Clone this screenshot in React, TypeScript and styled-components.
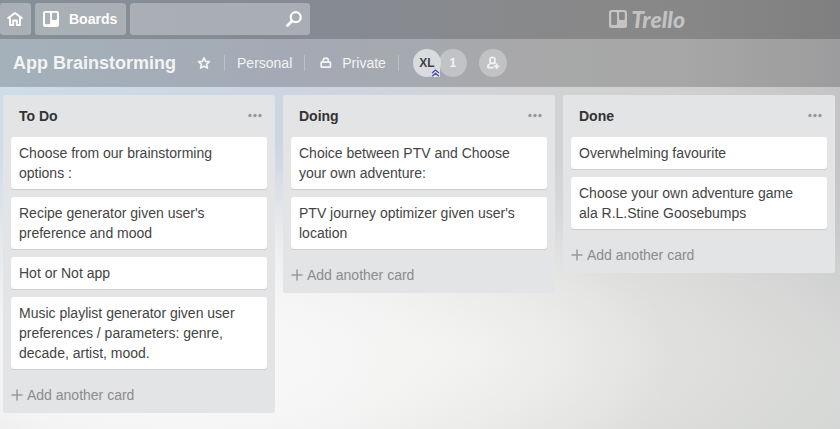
import React from "react";
import styled, { createGlobalStyle, css } from "styled-components";

const GlobalStyle = createGlobalStyle`
  *, *::before, *::after { box-sizing: border-box; }
  html, body, #root { height: 100%; }
  body {
    margin: 0;
    font-family: "Liberation Sans", Arial, sans-serif;
    font-size: 14px;
    line-height: 20px;
    color: #444;
    text-rendering: optimizeSpeed;
  }
  button, input { font: inherit; color: inherit; border: 0; margin: 0; padding: 0; text-rendering: inherit; }
  button { cursor: pointer; background: none; }
  a { color: inherit; text-decoration: none; }
  h1, h2, ul { margin: 0; padding: 0; }
  svg { display: block; flex: none; }
`;

const Page = styled.div`
  display: flex;
  flex-direction: column;
  min-height: 100%;
  background:
    radial-gradient(ellipse 60% 52% at 20% 84%, #fafafa 0%, rgba(248, 248, 248, 0.9) 35%, rgba(244, 244, 244, 0) 100%),
    radial-gradient(ellipse 58% 46% at 54% 82%, rgba(236, 236, 232, 0.95) 0%, rgba(230, 230, 228, 0) 100%),
    linear-gradient(to bottom, rgba(210, 212, 211, 0) 35%, #d2d4d3 85%),
    linear-gradient(to right, #cddde9 0%, #cdd5e3 34%, #d2d3d5 62%, #d0d0d0 82%, #c4c4c6 100%);
`;

const TopBar = styled.header`
  display: flex;
  align-items: center;
  gap: 4px;
  height: 39px;
  padding-bottom: 1px;
  background: rgba(0, 0, 0, 0.35);
  color: #fff;
`;

const navItem = css`
  display: flex;
  align-items: center;
  height: 32px;
  border-radius: 3px;
  background: rgba(255, 255, 255, 0.3);
`;

const NavButton = styled.button<{ $wide?: boolean }>`
  ${navItem}
  gap: 10px;
  padding: ${(p) => (p.$wide ? "0 9px 0 8px" : "0 8px 0 7px")};
  font-weight: 700;
`;

const SearchBox = styled.form`
  ${navItem}
  width: 180px;
  padding: 0 8px;
`;

const SearchInput = styled.input`
  flex: 1;
  min-width: 0;
  background: transparent;
  outline: none;
`;

const Logo = styled.a`
  display: flex;
  align-items: center;
  gap: 4px;
  margin: 0 155px 0 auto;
  color: rgba(255, 255, 255, 0.5);
  font: italic 900 23px/32px Lato, sans-serif;
`;

const BoardBar = styled.section`
  display: flex;
  align-items: center;
  height: 48px;
  padding-left: 13px;
  background: rgba(0, 0, 0, 0.2);
  color: #f3f3f3;
`;

const BoardTitle = styled.h1`
  margin-right: 20px;
  font-size: 18px;
  line-height: 24px;
`;

const BoardButton = styled.button`
  display: flex;
  align-items: center;
  gap: 8px;
  height: 32px;
`;

const Divider = styled.span`
  width: 1px;
  height: 16px;
  margin: 0 12px;
  background: rgba(255, 255, 255, 0.25);
`;

const Members = styled.div`
  display: flex;
  margin: 0 12px 0 2px;
`;

const Avatar = styled.button<{ $solid?: boolean }>`
  position: relative;
  z-index: ${(p) => (p.$solid ? 1 : 0)};
  display: grid;
  place-items: center;
  width: 28px;
  height: 28px;
  border-radius: 50%;
  background: ${(p) => (p.$solid ? "#d9dcdf" : "rgba(255, 255, 255, 0.3)")};
  color: ${(p) => (p.$solid ? "#444" : "#f3f3f3")};
  font-size: 12px;
  font-weight: 700;

  & + & { margin-left: -2px; }
`;

const AdminBadge = styled.span`
  position: absolute;
  right: 1px;
  bottom: 0;
  background: #dfe3e6;
`;

const Lists = styled.main`
  display: flex;
  flex: 1;
  align-items: flex-start;
  gap: 8px;
  padding: 8px 3px;
`;

const List = styled.section`
  flex: none;
  width: 272px;
  padding: 0 8px;
  border-radius: 3px;
  background: #e2e4e6;
`;

const ListHead = styled.div`
  display: flex;
  align-items: center;
  justify-content: space-between;
  height: 42px;
  padding: 0 4px 0 8px;
`;

const ListTitle = styled.h2`
  font-size: 14px;
  line-height: 20px;
  color: #333;
`;

const MenuButton = styled.button`
  color: #999;
`;

const Cards = styled.ul`
  display: grid;
  gap: 8px;
  list-style: none;
`;

const Card = styled.li`
  padding: 6px 16px 6px 8px;
  border-radius: 3px;
  background: #fff;
  box-shadow: 0 1px 0 #ccc;
`;

const AddCard = styled.button`
  display: flex;
  align-items: center;
  gap: 4px;
  width: 100%;
  height: 36px;
  margin-top: 8px;
  color: #8c8c8c;
`;

const HomeIcon = () => (
  <svg width="16" height="16" viewBox="0 0 16 16" fill="none" stroke="currentColor" strokeWidth="2" strokeLinejoin="round" strokeLinecap="round">
    <path d="M1.2 7 8 2l6.800 5" />
    <path d="M3 6.500V14h3.200v-4.500h3.600V14H13V6.500" />
  </svg>
);

const BoardIcon = ({ size }: { size: number }) => (
  <svg width={size} height={size} viewBox="0 0 18 18" fill="currentColor" fillRule="evenodd">
    <path d="M2.500 0h13A2.500 2.500 0 0 1 18 2.500v13a2.500 2.500 0 0 1-2.500 2.500h-13A2.500 2.500 0 0 1 0 15.500v-13A2.500 2.500 0 0 1 2.500 0ZM3.500 2A1.300 1.300 0 0 0 2.200 3.300v10.400A1.300 1.300 0 0 0 3.500 15H6.700A1.300 1.300 0 0 0 8 13.700V3.300A1.300 1.300 0 0 0 6.700 2ZM11.300 2A1.300 1.300 0 0 0 10 3.300v5.400A1.300 1.300 0 0 0 11.300 10h3.200a1.300 1.300 0 0 0 1.300-1.300V3.300A1.300 1.300 0 0 0 14.500 2Z" />
  </svg>
);

const SearchIcon = () => (
  <svg width="16" height="16" viewBox="0 0 16 16" fill="none" stroke="currentColor" strokeWidth="2.200">
    <circle cx="9.700" cy="6.200" r="5" />
    <path d="M6 10 1.500 14.500" strokeWidth="2.800" strokeLinecap="round" />
  </svg>
);

const StarIcon = () => (
  <svg width="16" height="16" viewBox="0 0 16 16" fill="none" stroke="currentColor" strokeWidth="1.700" strokeLinejoin="round">
    <path d="m8 2.800 1.600 3.500 3.800.4-2.800 2.600.8 3.800L8 11.200l-3.400 1.900.8-3.800-2.800-2.600 3.800-.4Z" />
  </svg>
);

const LockIcon = () => (
  <svg width="17" height="16" viewBox="-1 0 17 16" fill="none" stroke="currentColor" strokeWidth="1.700" strokeLinejoin="round">
    <rect x="3.200" y="7.100" width="9.200" height="5.100" rx="0.500" />
    <path d="M5.200 7V5.700a2.600 2.600 0 0 1 5.200 0V7" />
  </svg>
);

const InviteIcon = () => (
  <svg width="16" height="16" viewBox="0 0 16 16" fill="none" stroke="currentColor" strokeWidth="1.700" strokeLinejoin="round">
    <ellipse cx="7.500" cy="5.400" rx="2.600" ry="3" />
    <path d="M5.700 8.200 3 10.300v2.300h5.500M9.300 8.200l1 .7M11.600 8.500v5.600M8.800 11.300h5.600" />
  </svg>
);

const ChevronsIcon = () => (
  <svg width="9" height="8" viewBox="0 0 9 8" fill="none" stroke="#4a43b5" strokeWidth="1.200">
    <path d="m1 4 3.500-3L8 4M1 7.300l3.500-3 3.500 3" />
  </svg>
);

const DotsIcon = () => (
  <svg width="16" height="16" viewBox="0 0 16 16" fill="currentColor">
    <circle cx="3" cy="7.500" r="1.700" />
    <circle cx="8" cy="7.500" r="1.700" />
    <circle cx="13" cy="7.500" r="1.700" />
  </svg>
);

const PlusIcon = () => (
  <svg width="12" height="12" viewBox="0 0 12 12" fill="none" stroke="#999" strokeWidth="1.500">
    <path d="M6 .5v11M.5 6h11" />
  </svg>
);

const lists = [
  {
    title: "To Do",
    cards: [
      "Choose from our brainstorming options :",
      "Recipe generator given user's preference and mood",
      "Hot or Not app",
      "Music playlist generator given user preferences / parameters: genre, decade, artist, mood.",
    ],
  },
  {
    title: "Doing",
    cards: [
      "Choice between PTV and Choose your own adventure:",
      "PTV journey optimizer given user's location",
    ],
  },
  {
    title: "Done",
    cards: ["Overwhelming favourite", "Choose your own adventure game ala R.L.Stine Goosebumps"],
  },
];

export default function App() {
  return (
    <>
      <GlobalStyle />
      <Page>
        <TopBar>
          <NavButton aria-label="Home"><HomeIcon /></NavButton>
          <NavButton $wide><BoardIcon size={16} />Boards</NavButton>
          <SearchBox role="search">
            <SearchInput type="text" aria-label="Search" />
            <button type="button" aria-label="Submit search"><SearchIcon /></button>
          </SearchBox>
          <Logo href="#"><BoardIcon size={18} />Trello</Logo>
        </TopBar>
        <BoardBar>
          <BoardTitle>App Brainstorming</BoardTitle>
          <BoardButton aria-label="Star board"><StarIcon /></BoardButton>
          <Divider />
          <BoardButton>Personal</BoardButton>
          <Divider />
          <BoardButton><LockIcon />Private</BoardButton>
          <Divider />
          <Members>
            <Avatar $solid>XL<AdminBadge><ChevronsIcon /></AdminBadge></Avatar>
            <Avatar>1</Avatar>
          </Members>
          <Avatar aria-label="Invite"><InviteIcon /></Avatar>
        </BoardBar>
        <Lists>
          {lists.map((list) => (
            <List key={list.title}>
              <ListHead>
                <ListTitle>{list.title}</ListTitle>
                <MenuButton aria-label={`${list.title} list actions`}><DotsIcon /></MenuButton>
              </ListHead>
              <Cards>
                {list.cards.map((card) => <Card key={card}>{card}</Card>)}
              </Cards>
              <AddCard><PlusIcon />Add another card</AddCard>
            </List>
          ))}
        </Lists>
      </Page>
    </>
  );
}
